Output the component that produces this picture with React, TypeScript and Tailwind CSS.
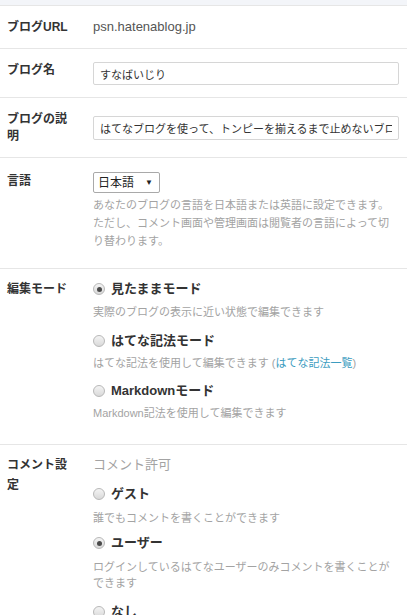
import React from "react";

const font = "font-['Liberation_Sans','Noto_Sans_CJK_JP',sans-serif]";

const Radio = ({ checked }: { checked?: boolean }) => (
  <span className="flex h-[12px] w-[12px] shrink-0 items-center justify-center rounded-full border border-[#b8b8b8] bg-gradient-to-b from-[#f4f4f4] to-[#d9d9d9]">
    {checked && <span className="h-[5px] w-[5px] rounded-full bg-[#4a4a4a]" />}
  </span>
);

const Option = ({
  label,
  checked,
  children,
  className = "",
}: {
  label: string;
  checked?: boolean;
  children?: React.ReactNode;
  className?: string;
}) => (
  <div className={className}>
    <div className="flex h-[20px] items-center gap-[6px]">
      <Radio checked={checked} />
      <span className="text-[13px] font-bold leading-[20px] text-[#333]">{label}</span>
    </div>
    {children && <div className="text-[11px] leading-[16px] text-[#a3a3a3]">{children}</div>}
  </div>
);

const Label = ({ children, className = "" }: { children: React.ReactNode; className?: string }) => (
  <div className={"w-[93px] shrink-0 pl-[7px] pr-[22px] text-[12px] font-bold text-[#333] " + className}>
    {children}
  </div>
);

export default function App() {
  return (
    <div className={`${font} w-[407px] bg-white`}>
      <div className="h-[5px] bg-[#f3f5f9]" />

      <div className="flex border-t border-[#e6e6e6] py-[11px]">
        <Label className="leading-[20px]">ブログURL</Label>
        <div className="text-[13px] leading-[20px] text-[#555]">psn.hatenablog.jp</div>
      </div>

      <div className="flex border-t border-[#e6e6e6]">
        <Label className="pt-[11px] leading-[20px]">ブログ名</Label>
        <div className="flex-1 pb-[12px] pr-[8px] pt-[13px]">
          <input
            readOnly
            defaultValue="すなばいじり"
            className="block h-[23px] w-full rounded-[2px] border border-[#d6d6d6] px-[6px] text-[11px] text-[#333] outline-none"
          />
        </div>
      </div>

      <div className="flex border-t border-[#e6e6e6]">
        <Label className="pt-[13px] leading-[17px]">ブログの説明</Label>
        <div className="flex-1 pb-[17px] pr-[8px] pt-[18px]">
          <input
            readOnly
            defaultValue="はてなブログを使って、トンピーを揃えるまで止めないブログです"
            className="block h-[24px] w-full rounded-[2px] border border-[#d6d6d6] px-[6px] text-[11px] text-[#333] outline-none"
          />
        </div>
      </div>

      <div className="flex border-t border-[#e6e6e6]">
        <Label className="pt-[13px] leading-[20px]">言語</Label>
        <div className="flex-1 pb-[18px] pr-[8px] pt-[14px]">
          <div className="flex h-[21px] w-[67px] items-center justify-between rounded-[2px] border border-[#a9a9a9] pl-[4px] pr-[6px] text-[12px] text-[#222]">
            <span>日本語</span>
            <span className="text-[8px]">▼</span>
          </div>
          <p className="mt-[3px] text-[11px] leading-[18px] text-[#a3a3a3]">
            あなたのブログの言語を日本語または英語に設定できます。ただし、コメント画面や管理画面は閲覧者の言語によって切り替わります。
          </p>
        </div>
      </div>

      <div className="flex border-t border-[#e6e6e6]">
        <Label className="pt-[10px] leading-[20px]">編集モード</Label>
        <div className="flex-1 pb-[23px] pr-[8px] pt-[10px]">
          <Option label="見たままモード" checked className="[&>div:last-child]:mt-[5px]">
            実際のブログの表示に近い状態で編集できます
          </Option>
          <Option label="はてな記法モード" className="mt-[11px] [&>div:last-child]:mt-[4px]">
            はてな記法を使用して編集できます (<span className="text-[#3c9cc0]">はてな記法一覧</span>)
          </Option>
          <Option label="Markdownモード" className="mt-[10px] [&>div:last-child]:mt-[4px]">
            Markdown記法を使用して編集できます
          </Option>
        </div>
      </div>

      <div className="flex border-t border-[#e6e6e6]">
        <Label className="pt-[10px] leading-[20px]">コメント設定</Label>
        <div className="flex-1 pr-[8px] pt-[10px]">
          <div className="text-[13px] leading-[20px] text-[#a3a3a3]">コメント許可</div>
          <Option label="ゲスト" className="mt-[9px] [&>div:last-child]:mt-[6px]">
            誰でもコメントを書くことができます
          </Option>
          <Option label="ユーザー" checked className="mt-[7px] [&>div:last-child]:mt-[6px]">
            ログインしているはてなユーザーのみコメントを書くことができます
          </Option>
          <Option label="なし" className="mt-[11px]" />
        </div>
      </div>
    </div>
  );
}
